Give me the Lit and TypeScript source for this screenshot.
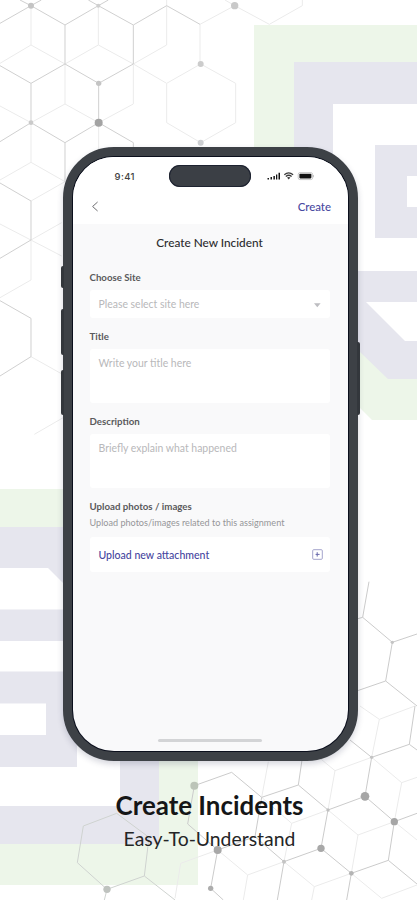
import { LitElement, html, svg, css } from "lit";
import { customElement, property } from "lit/decorators.js";

// Lattice coordinates are in thirds of a pixel.
const TOP_DARK =
  "M0 70L93 17L195 75L295 17L400 75L500 17L600 73M93 17L60 0M93 17L124 0M295 17L265 0M295 17L325 0M195 75V192M400 75V192M0 197L93 250L195 192L296 250L400 192M93 250V368L0 425M93 368L195 428L296 368L400 428V450M195 428V545M0 549L93 603V720L0 775M0 902L93 955V1070L0 1128M296 250V368";
const TOP_LIGHT =
  "M93 17V135L0 190M93 135L195 192L295 135V17M295 135L400 192L500 135V0M600 73V192M600 73L704 17L808 73L907 17V0M704 17L675 0M400 192L500 250M195 192V312L93 368L0 318M195 312L296 368L400 312V192M93 368V487L0 540M93 487L195 545L93 603M296 368V450M602 192L707 250V368L602 428L500 368V250ZM0 672L185 768M93 720L185 668M93 720V840L0 893M93 1070L200 1130M200 1247L103 1303";
const LOW_DARK =
  "M507 -295L488 -188L470 -183M488 -188L577 -113L651 -138M577 -113L557 3L651 78M470 33L557 3M645 78L628 193L515 232L450 180M515 232L495 349L583 425L651 400M628 193L651 210M583 425L565 541L454 580L363 505L252 545M565 541L651 612M495 349L384 390L295 315L306 240M384 390L363 505M295 315L185 352L95 277L-17 317L-37 432L53 510L165 470L185 352M165 470L252 545L232 660M454 580L440 660M53 510L32 625L70 660";
const LOW_LIGHT =
  "M480 78L538 118L645 78M538 118L515 232L605 308L651 292M605 308L583 425L474 465L384 390L405 272L515 232M405 272L360 235M474 465L454 580L545 655L651 615M205 245L185 352L275 430L384 390M275 430L252 545L343 620L454 580M343 620L335 660M53 510L143 585L252 545M143 585L130 660M583 425L651 480M53 510L-58 550L-75 655";
const LOW_HEX =
  "M-250 400L-350 438L-368 548L-279 628L-167 588L-153 472ZM-167 588L-75 660M-279 628L-287 660";

const TOP_DOTS: [number, number, number, string][] = [
  [93, 17, 9, "#c4c4c4"], [295, 17, 6, "#cfcfcf"], [704, 17, 11, "#c9c9c9"],
  [602, 192, 9, "#cccccc"], [602, 428, 9, "#cdcfd2"], [296, 250, 8, "#c4c4c4"],
  [296, 368, 12, "#a3a3a3"], [93, 368, 7, "#cacaca"],
];
const LOW_DOTS: [number, number, number, string][] = [
  [495, 349, 13, "#a6a6a6"], [583, 425, 11, "#a6a6a6"], [363, 505, 11, "#a8a8a8"],
  [454, 580, 7, "#b4b4b4"], [252, 545, 6, "#c4c4c4"], [53, 510, 12, "#a8a8a8"],
  [32, 625, 8, "#adadad"], [-17, 317, 12, "#bcc4b8"], [-279, 628, 11, "#bfc3bf"],
  [384, 390, 5, "#c0c0c0"], [515, 232, 5, "#c4c4c4"], [577, -113, 5, "#c4c4c4"],
];
const dots = (list: [number, number, number, string][]) =>
  list.map(([x, y, r, c]) => svg`<circle cx=${x} cy=${y} r=${r} fill=${c} />`);

@customElement("brand-backdrop")
export class BrandBackdrop extends LitElement {
  static styles = css`
    :host { display: block; }
    svg { display: block; }
    .green { fill: #edf6e9; }
    .lav { fill: #e6e6ee; }
    .white { fill: #fff; }
    .net { fill: none; stroke-width: 3; }
    .dark { stroke: #d0d0d0; }
    .light { stroke: #ebebeb; }
    .grey { stroke: #cbcbcb; }
    .hex { stroke: #cfd3d0; }
  `;
  render() {
    return html`<svg width="417" height="900" viewBox="0 0 417 900">
      <path class="green" d="M254 25H417V420H372L361 409L254 302Z" />
      <path class="lav" d="M294 62H417V379H388L359 351L294 290Z" />
      <path class="white" d="M333 104H417V271H333Z" />
      <path class="lav" d="M375 145H417V238H375Z" />
      <path class="white" d="M407 176H417V207H407Z" />
      <path class="white" d="M366 302H417V341H405Z" />
      <path class="green" d="M0 489H198V885H0Z" />
      <path class="lav" d="M0 527H159V844H0Z" />
      <path class="white" d="M0 568H48L88 608H120V806H0Z" />
      <path class="lav" d="M0 609.5H77V641H0ZM0 671.5H77V767H0Z" />
      <path class="white" d="M0 703.5H46V735H0Z" />
      <g transform="scale(.33333)">
        <path class="net light" d=${TOP_LIGHT} />
        <path class="net dark" d=${TOP_DARK} />
        ${dots(TOP_DOTS)}
      </g>
      <g transform="translate(200 680) scale(.33333)">
        <path class="net light" d=${LOW_LIGHT} />
        <path class="net grey" d=${LOW_DARK} />
        <path class="net hex" d=${LOW_HEX} />
        ${dots(LOW_DOTS)}
      </g>
    </svg>`;
  }
}

@customElement("form-field")
export class FormField extends LitElement {
  @property() label = "";
  @property() hint = "";
  @property() kind = "area";
  static styles = css`
    :host { display: block; }
    .label { font-size: 9.7px; line-height: 12px; font-weight: 700; color: #5a5a5c; height: 12px; white-space: nowrap; }
    .box {
      display: flex; justify-content: space-between; box-sizing: border-box; margin-top: 7px;
      background: #fff; border-radius: 3px; padding: 8.5px 9px 0; height: 54px;
      font-size: 10.45px; line-height: 12px; color: #b8b8ba; white-space: nowrap;
    }
    .select { height: 28px; padding-top: 8px; }
    .caret { margin-top: 4.5px; }
  `;
  render() {
    const select = this.kind === "select";
    return html`<div class="label">${this.label}</div>
      <div class="box ${select ? "select" : ""}">
        <span>${this.hint}</span>
        ${select ? html`<svg class="caret" width="7" height="5" viewBox="0 0 7 5"><path d="M0 .3H6.6L3.3 4.3Z" fill="#bdbdc1" /></svg>` : ""}
      </div>`;
  }
}

@customElement("app-root")
export class AppRoot extends LitElement {
  static styles = css`
    :host {
      display: block; position: relative; width: 417px; height: 900px; overflow: hidden;
      background: #fff; font-family: Lato, "Liberation Sans", sans-serif;
    }
    .backdrop { position: absolute; inset: 0; }
    .page { position: relative; display: flex; flex-direction: column; align-items: center; padding-top: 147px; }
    .phone {
      position: relative; box-sizing: border-box; width: 295px; height: 614px; margin-left: 4px;
      border: 9px solid #3d4146; border-radius: 51px; background: #0b0f1c; padding: 1px;
      box-shadow: 0 3px 6px rgba(40, 45, 80, .2);
    }
    .key { position: absolute; width: 3px; background: #33373c; border-radius: 2px 0 0 2px; left: -11px; }
    .k1 { top: 109.5px; height: 22px; }
    .k2 { top: 153px; height: 46px; }
    .k3 { top: 214px; height: 45px; }
    .k4 { top: 186px; height: 73px; left: auto; right: -11px; border-radius: 0 2px 2px 0; }
    .screen { display: flex; flex-direction: column; height: 100%; border-radius: 41px; overflow: hidden; background: #f9f9fa; }
    .head { background: #fff; height: 67px; }
    .status { display: grid; grid-template-columns: 96px 82px 1fr; height: 38px; align-items: center; }
    .time { font-size: 9.5px; font-weight: 500; color: #404040; padding-left: 41.5px; letter-spacing: .4px; font-family: Inter, sans-serif; }
    .island { height: 21.5px; border-radius: 11px; background: #3b3f45; box-shadow: inset 0 0 0 1px #1d2230; }
    .signals { padding-left: 16px; display: block; }
    .nav { display: flex; justify-content: space-between; align-items: center; height: 23px; padding: 0 17px 0 18px; }
    .create { font-size: 11.4px; color: #4848a0; font-weight: 500; }
    .body { display: flex; flex-direction: column; padding: 0 18.5px 0 16.5px; }
    .title { margin-top: 11px; height: 16px; font-size: 11.8px; line-height: 16px; font-weight: 500; color: #2b2b2d; text-align: center; white-space: nowrap; }
    .f1 { margin-top: 20px; }
    .f2 { margin-top: 11.5px; }
    .f3 { margin-top: 12.4px; }
    .label { margin-top: 12px; font-size: 9.7px; line-height: 12px; font-weight: 700; color: #5a5a5c; }
    .sub { margin-top: 5.2px; font-size: 9.1px; line-height: 12px; color: #969699; white-space: nowrap; }
    .upload {
      margin-top: 8px; height: 35px; border-radius: 3px; background: #fff; display: flex; align-items: center;
      justify-content: space-between; padding: 0 7px 0 9px; font-size: 10.55px; color: #4646a0; font-weight: 500;
    }
    .home { width: 104px; height: 3px; border-radius: 2px; background: #d3d4d6; margin: auto auto 9px 85px; }
    .caption { margin-top: 27px; font-size: 25.9px; line-height: 34px; font-weight: 700; color: #151617; margin-left: 2px; white-space: nowrap; }
    .tagline { margin-top: 4px; font-size: 19.4px; line-height: 26px; color: #242526; margin-left: 2px; white-space: nowrap; }
  `;
  render() {
    return html`
      <brand-backdrop class="backdrop"></brand-backdrop>
      <main class="page">
        <div class="phone">
          <i class="key k1"></i><i class="key k2"></i><i class="key k3"></i><i class="key k4"></i>
          <div class="screen">
            <div class="head">
              <div class="status">
                <span class="time">9:41</span>
                <span class="island"></span>
                <svg class="signals" width="48" height="10" viewBox="0 0 48 10">
                  <path d="M.5 7H2V8.5H.5ZM3.5 6H5V8.5H3.5ZM6.4 5H7.9V8.5H6.4ZM9 3.5H10.3V8.5H9ZM11.5 1.8H13V8.5H11.5Z" fill="#151515" />
                  <path d="M17.3 3.7Q21.7 .2 26.1 3.7M18.8 5.4Q21.7 3.1 24.6 5.4" fill="none" stroke="#3a3a3a" stroke-width="1.3" />
                  <path d="M20 6.6Q21.7 5.4 23.4 6.6L21.7 8.5Z" fill="#3a3a3a" />
                  <rect x="31.2" y="1.6" width="14.4" height="7" rx="1.8" fill="#fff" stroke="#bbb" stroke-width=".8" />
                  <rect x="32.4" y="2.8" width="12" height="4.6" rx=".8" fill="#111" />
                  <path d="M46.5 4V6.2" stroke="#bbb" stroke-width=".8" />
                </svg>
              </div>
              <div class="nav">
                <svg width="8" height="11" viewBox="0 0 8 11"><path d="M6.6 1L1.6 5.5L6.6 10" fill="none" stroke="#6d6d70" stroke-width="1" /></svg>
                <span class="create">Create</span>
              </div>
            </div>
            <div class="body">
              <div class="title">Create New Incident</div>
              <form-field class="f1" kind="select" label="Choose Site" hint="Please select site here"></form-field>
              <form-field class="f2" label="Title" hint="Write your title here"></form-field>
              <form-field class="f3" label="Description" hint="Briefly explain what happened"></form-field>
              <div class="label">Upload photos / images</div>
              <div class="sub">Upload photos/images related to this assignment</div>
              <div class="upload">
                <span>Upload new attachment</span>
                <svg width="11" height="11" viewBox="0 0 11 11">
                  <rect x=".7" y=".7" width="9.6" height="9.6" rx="1" fill="none" stroke="#9a9ac6" stroke-width=".9" />
                  <path d="M5.2 3.2V7.6M3.6 5.4H7.6" fill="none" stroke="#6868ac" stroke-width="1" />
                </svg>
              </div>
            </div>
            <div class="home"></div>
          </div>
        </div>
        <div class="caption">Create Incidents</div>
        <div class="tagline">Easy-To-Understand</div>
      </main>`;
  }
}
